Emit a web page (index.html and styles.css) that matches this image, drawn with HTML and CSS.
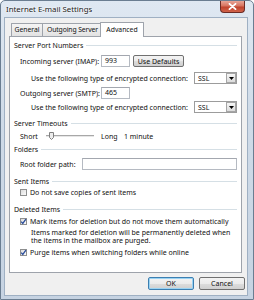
FILE: index.html
```html
<!DOCTYPE html>
<html>
<head>
<meta charset="utf-8">
<link rel="stylesheet" href="styles.css">
</head>
<body>
<div class="window">
  <div class="titlebar">
    <span class="title">Internet E-mail Settings</span>
    <div class="close">
      <svg width="9" height="7" viewBox="0 0 9 7"><path d="M1.5 0.8 L7.5 6.2 M7.5 0.8 L1.5 6.2" stroke="#fff" stroke-width="1.8" stroke-linecap="round"/></svg>
    </div>
  </div>
  <div class="client">
    <div class="tabs">
      <div class="tab">General</div>
      <div class="tab tab-wide">Outgoing Server</div>
      <div class="tab active">Advanced</div>
    </div>
    <div class="panel">
      <div class="group">Server Port Numbers</div>
      <div class="row mt5">
        <span class="label">Incoming server (IMAP):</span>
        <span class="input port">993</span>
        <span class="btn small">Use Defaults</span>
      </div>
      <div class="row use mt5">
        <span>Use the following type of encrypted connection:</span>
        <span class="combo"><span class="combo-text">SSL</span><span class="combo-arrow"><svg width="5" height="3" viewBox="0 0 5 3"><path d="M0 0 H5 L2.5 3 Z" fill="#000"/></svg></span></span>
      </div>
      <div class="row mt3">
        <span class="label">Outgoing server (SMTP):</span>
        <span class="input port">465</span>
      </div>
      <div class="row use mt2">
        <span>Use the following type of encrypted connection:</span>
        <span class="combo"><span class="combo-text">SSL</span><span class="combo-arrow"><svg width="5" height="3" viewBox="0 0 5 3"><path d="M0 0 H5 L2.5 3 Z" fill="#000"/></svg></span></span>
      </div>
      <div class="group mt5">Server Timeouts</div>
      <div class="row mt2">
        <span class="short">Short</span>
        <svg class="slider" width="48" height="12" viewBox="0 0 48 12">
          <rect x="0" y="5" width="48" height="1" fill="#a8a8a8"/>
          <rect x="0" y="6" width="48" height="1" fill="#e6e6e6"/>
          <path d="M3.5 2.5 H7.5 V7.5 L5.5 9.5 L3.5 7.5 Z" fill="#ececec" stroke="#808080" stroke-width="1"/>
        </svg>
        <span class="long">Long</span>
        <span>1 minute</span>
      </div>
      <div class="group mt2">Folders</div>
      <div class="row mt4">
        <span class="label root">Root folder path:</span>
        <span class="input path"></span>
      </div>
      <div class="group mt6">Sent Items</div>
      <div class="check-row mt1">
        <span class="box"></span>
        <span>Do not save copies of sent items</span>
      </div>
      <div class="group mt7">Deleted Items</div>
      <div class="check-row mt2">
        <span class="box"><svg width="7" height="7" viewBox="0 0 7 7"><path d="M1.2 3.6 L2.8 5.4 L5.9 1.2" fill="none" stroke="#2a4d9b" stroke-width="1.3"/></svg></span>
        <span>Mark items for deletion but do not move them automatically</span>
      </div>
      <div class="desc mt3">Items marked for deletion will be permanently deleted when<br>the items in the mailbox are purged.</div>
      <div class="check-row mt2">
        <span class="box"><svg width="7" height="7" viewBox="0 0 7 7"><path d="M1.2 3.6 L2.8 5.4 L5.9 1.2" fill="none" stroke="#2a4d9b" stroke-width="1.3"/></svg></span>
        <span>Purge items when switching folders while online</span>
      </div>
    </div>
    <div class="buttons">
      <span class="btn big default">OK</span>
      <span class="btn big">Cancel</span>
    </div>
  </div>
</div>
</body>
</html>
```
FILE: styles.css
```css
* { box-sizing: border-box; }
html, body { margin: 0; padding: 0; background: #fff; }
body {
  font-family: "Noto Sans", "Open Sans", sans-serif;
  font-size: 7px;
  color: #111;
}
.window {
  width: 254px;
  height: 300px;
  border: 1px solid #6a7d91;
  border-radius: 5px 5px 0 0;
  background: linear-gradient(180deg, #dfe8f2 0%, #cfdbe8 40%, #c6d3e2 100%);
  overflow: hidden;
}
.titlebar {
  height: 16px;
  display: flex;
  align-items: flex-start;
  padding: 0 8px 0 5px;
}
.title {
  font-size: 7.8px;
  line-height: 17px;
  color: #1a1a1a;
  text-shadow: 0 0 3px #fff, 0 0 2px #fff;
}
.close {
  margin-left: auto;
  width: 25px;
  height: 12px;
  border: 1px solid #6b2b25;
  border-top: none;
  border-radius: 0 0 4px 4px;
  background: linear-gradient(180deg, #e8a597 0%, #d6735f 45%, #c0432d 55%, #d0634b 100%);
  display: flex;
  align-items: center;
  justify-content: center;
}
.client {
  margin-left: 3px;
  width: 244px;
  height: 279px;
  border: 1px solid #9fb0c3;
  background: #f0f0f0;
}
.tabs {
  display: flex;
  align-items: flex-end;
  height: 14px;
  margin-top: 4px;
  margin-left: 6px;
  position: relative;
  z-index: 1;
}
.tab {
  width: 32px;
  height: 13px;
  border: 1px solid #9ea3ab;
  border-bottom: none;
  border-radius: 1px 1px 0 0;
  background: linear-gradient(180deg, #f4f4f4, #e2e2e2);
  text-align: center;
  line-height: 12px;
  font-size: 6.8px;
  white-space: nowrap;
  color: #111;
}
.tab-wide { width: 61px; margin-left: -1px; letter-spacing: -0.1px; }
.tab.active {
  width: 44px;
  height: 15px;
  margin-left: -3px;
  margin-bottom: -1px;
  background: #fff;
  line-height: 13px;
}
.panel {
  margin-left: 4px;
  width: 233px;
  height: 237px;
  border: 1px solid #9ea3ab;
  background: #fff;
  padding: 3px 4px 0 4px;
  display: flex;
  flex-direction: column;
}
.group {
  height: 10px;
  display: flex;
  align-items: center;
  white-space: nowrap;
}
.group::after {
  content: "";
  flex: 1;
  height: 1px;
  background: #d5dfe5;
  margin-left: 3px;
}
.row {
  height: 12px;
  display: flex;
  align-items: center;
  padding-left: 6px;
  white-space: nowrap;
}
.row.use { padding-left: 17px; }
.label { width: 81px; }
.label.root { width: 62px; }
.input {
  height: 12px;
  border: 1px solid #b5bac2;
  border-top-color: #a3a7af;
  background: #fff;
  padding-left: 3px;
  line-height: 10px;
}
.port { width: 29px; }
.path { width: 155px; }
.btn {
  display: inline-flex;
  align-items: center;
  justify-content: center;
  border: 1px solid #707070;
  border-radius: 2px;
  background: linear-gradient(180deg, #f3f3f3 0%, #ebebeb 50%, #dddddd 51%, #cfcfcf 100%);
  color: #111;
}
.btn.small {
  width: 51px;
  height: 12px;
  margin-left: 3px;
}
.combo {
  margin-left: auto;
  width: 43px;
  height: 12px;
  border: 1px solid #9c9c9c;
  background: #fff;
  display: flex;
  align-items: center;
}
.combo-text { padding-left: 3px; flex: 1; }
.combo-arrow {
  width: 10px;
  height: 10px;
  border: 1px solid #a5a5a5;
  background: linear-gradient(180deg, #f6f6f6, #dcdcdc);
  display: flex;
  align-items: center;
  justify-content: center;
}
.short { width: 26px; }
.slider { display: block; }
.long { width: 23px; margin-left: 7px; }
.check-row {
  height: 10px;
  display: flex;
  align-items: center;
  padding-left: 6px;
  white-space: nowrap;
}
.box {
  width: 7px;
  height: 7px;
  border: 1px solid #8e8f8f;
  background: linear-gradient(135deg, #dcdcdc, #fbfbfb);
  margin-right: 3px;
  display: flex;
  align-items: center;
  justify-content: center;
}
.box svg { margin: -1px; }
.desc {
  padding-left: 17px;
  line-height: 8px;
  white-space: nowrap;
}
.mt1 { margin-top: 1px; }
.mt2 { margin-top: 2px; }
.mt3 { margin-top: 3px; }
.mt4 { margin-top: 4px; }
.mt5 { margin-top: 5px; }
.mt6 { margin-top: 6px; }
.mt7 { margin-top: 7px; }
.buttons {
  display: flex;
  justify-content: flex-end;
  gap: 5px;
  margin-top: 4px;
  padding-right: 2px;
}
.btn.big {
  width: 46px;
  height: 13px;
}
.btn.default {
  border-color: #3c7fb1;
  box-shadow: inset 0 0 0 1px #9ad3f3;
}
```
